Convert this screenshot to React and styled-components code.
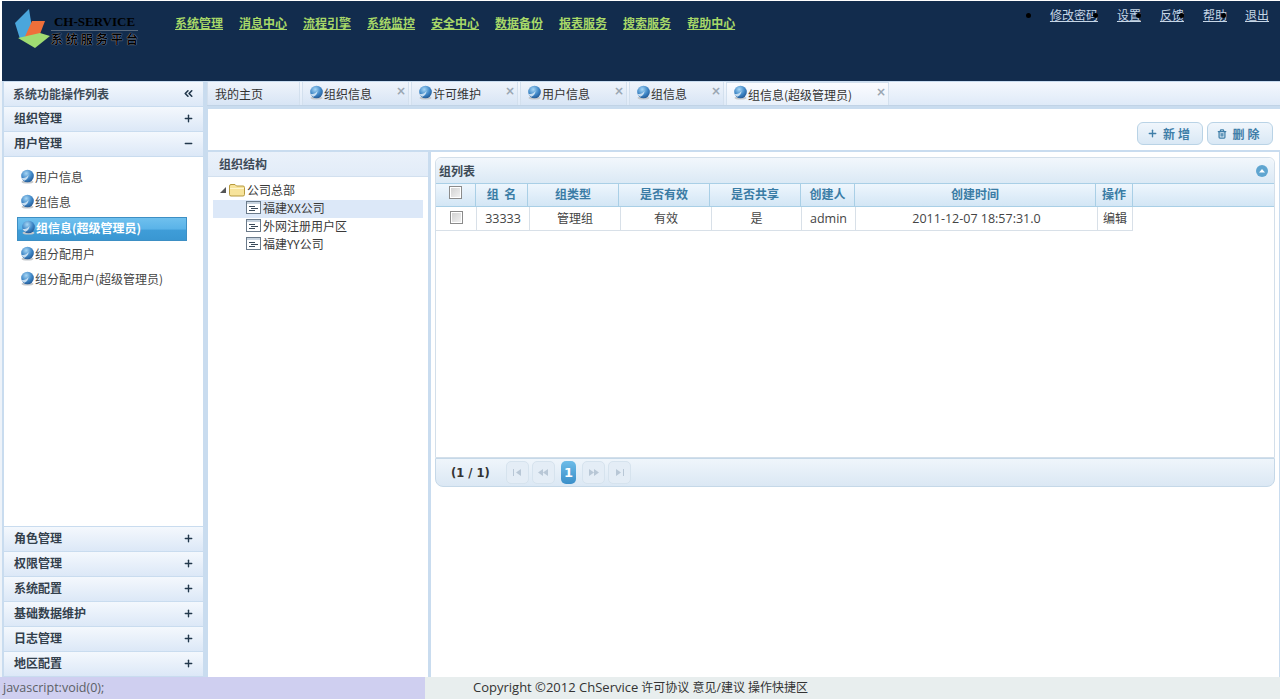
import React from 'react';
import styled, { createGlobalStyle } from 'styled-components';
import { ChevronsLeft, Plus, Minus, Trash2 } from 'lucide-react';

const CJK = '"Noto Sans CJK SC", "Noto Sans", sans-serif';
const BAR = 'linear-gradient(#f4f8fd, #dce8f7)';

const Global = createGlobalStyle`
  html, body { margin: 0; padding: 0; background: #fff; }
  body { font: 12px ${CJK}; color: #333; }
  * { box-sizing: border-box; }
`;

const Page = styled.div`
  width: 1280px;
  height: 699px;
  display: flex;
  flex-direction: column;
  overflow: hidden;
`;

const Header = styled.header`
  height: 80px;
  flex: none;
  margin: 1px 0 0 2px;
  background: #122c4d;
  display: flex;
  align-items: flex-start;
`;

const Logo = styled.div`
  width: 173px;
  flex: none;
  display: flex;
  padding: 7px 0 0 12px;
`;

const LogoText = styled.div`
  width: 87px;
  flex: none;
  margin-top: 7px;
  color: #000;
  text-align: center;
`;

const LogoEn = styled.div`
  font: bold 13px/14px "Liberation Serif", serif;
  white-space: nowrap;
  padding-bottom: 1px;
  border-bottom: 1px solid #5a6b80;
`;

const LogoCn = styled.div`
  font: bold 12px/16px ${CJK};
  letter-spacing: 3px;
  white-space: nowrap;
  text-shadow: 0 0 1px rgba(255, 255, 255, .9);
`;

const Nav = styled.nav`
  display: flex;
  gap: 16px;
  padding-top: 13px;
`;

const NavLink = styled.a`
  font-size: 12px;
  line-height: 17px;
  font-weight: bold;
  color: #a8d868;
  text-decoration: underline;
`;

const UserLinks = styled.ul`
  margin: 0 0 0 auto;
  padding: 5px 11px 0 0;
  display: flex;
  gap: 11px;
`;

const UserLink = styled.li`
  list-style: disc;
  color: #000;
  line-height: 17px;

  &:last-child { margin-left: -1px; }

  a {
    display: inline-block;
    margin-left: 8px;
    color: #c6d6e6;
    text-decoration: underline;
  }
`;

const Main = styled.div`
  flex: 1;
  min-height: 0;
  display: flex;
  background: #c9dcef;
`;

const Sidebar = styled.aside`
  width: 207px;
  flex: none;
  padding: 1px 4px 1px 4px;
  display: flex;
  flex-direction: column;
  gap: 1px;
  background: linear-gradient(90deg, #eef3f9 0, #eef3f9 2px, #c9dcef 2px);
`;

const SideTitle = styled.div`
  height: 24px;
  flex: none;
  display: flex;
  align-items: center;
  justify-content: space-between;
  padding: 0 8px 2px 9px;
  background: ${BAR};
  font-weight: bold;
  color: #3d4a57;
  svg { color: #22384c; }
`;

const SideHead = styled(SideTitle)`
  padding: 0 9px 4px 10px;
  font-size: 12px;
  color: #33404c;
  svg { margin-top: 2px; }
`;

const SideBody = styled.div`
  flex: 1;
  background: #fff;
  padding: 8px 0 0 13px;
`;

const SideItem = styled.div`
  width: 170px;
  height: 24px;
  margin-bottom: ${p => p.$after}px;
  display: flex;
  align-items: center;
  padding: 0 0 ${p => (p.$active ? 4 : 2)}px ${p => (p.$active ? 3 : 2)}px;
  color: ${p => (p.$active ? '#fff' : '#444')};
  font-weight: ${p => (p.$active ? 'bold' : 'normal')};
  background: ${p => (p.$active ? 'linear-gradient(#6fc0ee, #5ab3e8 50%, #3f9dd8 55%, #3a97d2)' : 'none')};
  border: 1px solid ${p => (p.$active ? '#3d8fc4' : 'transparent')};
  svg { flex: none; }
`;

const Content = styled.div`
  flex: 1;
  min-width: 0;
  display: flex;
  flex-direction: column;
  padding: 1px 0 0 0;
`;

const TabBar = styled.div`
  height: 24px;
  flex: none;
  display: flex;
  background: linear-gradient(#f4f8fd, #dfeaf8);
  border-bottom: 1px solid #c1d3e6;
`;

const Tab = styled.div`
  width: ${p => p.$w}px;
  margin-right: ${p => p.$gap}px;
  flex: none;
  display: flex;
  align-items: center;
  padding-left: ${p => (p.$plain ? 7 : 6)}px;
  font-size: 12px;
  color: #333;
  border: solid #d3e0ee;
  border-width: ${p => (p.$active ? '1px 1px 0' : '0 1px 0 1px')};
  background: ${p => (p.$active ? 'linear-gradient(#fbfcff, #e8f0fa)' : 'linear-gradient(#eff4fb, #d8e5f5)')};
  svg { flex: none; margin-top: -3px; }
`;

const TabClose = styled.span`
  margin-left: auto;
  padding-right: 2px;
  margin-top: -5px;
  color: #9aa6b2;
  font: bold 12px "DejaVu Sans", sans-serif;
`;

const Toolbar = styled.div`
  height: 41px;
  flex: none;
  margin: 3px 0 2px 1px;
  background: #fff;
  display: flex;
  align-items: flex-start;
  justify-content: flex-end;
  gap: 4px;
  padding: 13px 7px 0 0;
`;

const ToolButton = styled.button`
  width: 66px;
  height: 23px;
  padding: 0;
  display: flex;
  align-items: center;
  justify-content: center;
  gap: 5px;
  border: 1px solid #b9d3e6;
  border-radius: 6px;
  background: linear-gradient(#f0f6fc, #d9e8f5);
  color: #3f7ea8;
  font: bold 12px ${CJK};
  letter-spacing: 3px;
`;

const Panes = styled.div`
  flex: 1;
  min-height: 0;
  display: flex;
  gap: 3px;
  margin-left: 1px;
`;

const TreePane = styled.section`
  width: 220px;
  flex: none;
  background: #fff;
`;

const PaneTitle = styled.div`
  height: 25px;
  display: flex;
  align-items: center;
  padding: 0 0 2px 11px;
  font-weight: bold;
  color: #3d4a57;
  background: linear-gradient(#eaf1fa, #e2ecf8);
  border-bottom: 1px solid #d2e0ef;
`;

const Tree = styled.div`
  padding: 5px 5px 0;
`;

const TreeRow = styled.div`
  height: 18px;
  display: flex;
  align-items: center;
  gap: 2px;
  padding: 0 0 3px ${p => p.$indent}px;
  color: #3a3a3a;
  background: ${p => (p.$selected ? '#dce8f8' : 'none')};
`;

const GridPane = styled.section`
  flex: 1;
  min-width: 0;
  margin-right: 1px;
  background: #fff;
  padding: 5px 4px 0 4px;
`;

const GridBox = styled.div`
  height: 301px;
  border: 1px solid #d3dfea;
  border-radius: 6px 6px 0 0;
`;

const GridTitle = styled.div`
  height: 25px;
  display: flex;
  align-items: center;
  justify-content: space-between;
  padding: 0 6px 0 3px;
  font-weight: bold;
  color: #3d4a57;
  border-radius: 6px 6px 0 0;
  background: linear-gradient(#f2f7fc, #dbe9f5);
`;

const HeadRow = styled.div`
  height: 24px;
  display: flex;
  border: solid #a9cfe6;
  border-width: 1px 0;
  background: linear-gradient(#eef6fd, #d3e6f5);
`;

const HeadCell = styled.div`
  width: ${p => p.$w}px;
  flex: none;
  display: flex;
  align-items: center;
  justify-content: center;
  padding-bottom: 3px;
  border-right: 1px solid #a9cfe6;
  color: #3a7ca5;
  font-weight: bold;
  word-spacing: 3px;
`;

const Row = styled.div`
  width: 697px;
  height: 24px;
  display: flex;
  border-bottom: 1px solid #d8e0e8;
`;

const Cell = styled.div`
  width: ${p => p.$w}px;
  flex: none;
  display: flex;
  align-items: center;
  justify-content: center;
  padding-bottom: ${p => (p.$latin ? 0 : 2)}px;
  border-right: 1px solid #d8e0e8;
  color: #444;
  font: ${p => (p.$latin ? '12.5px "Open Sans", sans-serif' : `12px ${CJK}`)};
`;

const Check = styled.span`
  width: 13px;
  height: 13px;
  border: 1px solid #8b8b8b;
  background: linear-gradient(135deg, #cfcfcf, #f4f4f4);
  box-shadow: inset 0 0 0 1px #fff;
`;

const HeadCheck = styled(Check)`
  margin-top: -2px;
`;

const Pager = styled.div`
  height: 29px;
  display: flex;
  align-items: center;
  padding-left: 15px;
  border: 1px solid #c5d8e8;
  border-radius: 0 0 8px 8px;
  background: linear-gradient(#eff5fb, #dbe8f4);
`;

const PageInfo = styled.span`
  width: 55px;
  flex: none;
  color: #333;
  font: bold 11.5px "DejaVu Sans", sans-serif;
`;

const PageButton = styled.span`
  width: 23px;
  height: 23px;
  margin-right: ${p => p.$gap}px;
  display: flex;
  align-items: center;
  justify-content: center;
  border: 1px solid #d6e3ee;
  border-radius: 5px;
  background: #e4edf6;
  color: #b8c7d6;
`;

const PageCurrent = styled.span`
  width: 15px;
  height: 23px;
  margin-right: 6px;
  display: flex;
  align-items: center;
  justify-content: center;
  border-radius: 5px;
  background: linear-gradient(#6dbce8, #3b8fc9);
  color: #fff;
  font: bold 13px "DejaVu Sans", sans-serif;
`;

const Footer = styled.footer`
  height: 22px;
  flex: none;
  display: flex;
  background: #e8eeee;
  color: #333;
`;

const Status = styled.div`
  width: 425px;
  flex: none;
  padding-left: 3px;
  background: #cfcff0;
  color: #5c5f66;
  font: 12.5px/21px "Open Sans", sans-serif;
`;

const Copyright = styled.div`
  padding-left: 48px;
  font: 12px/20px "Open Sans", ${CJK};
`;

const CopyrightLatin = styled.span`
  font-size: 13px;
`;

const Globe = ({ id }) => (
  <svg width="15" height="15" viewBox="0 0 15 15">
    <defs>
      <radialGradient id={id} cx="0.4" cy="0.3" r="0.8">
        <stop offset="0" stopColor="#a6d6f5" />
        <stop offset="0.55" stopColor="#3e86c6" />
        <stop offset="1" stopColor="#1d4f8a" />
      </radialGradient>
    </defs>
    <ellipse cx="7.5" cy="13" rx="6" ry="1.6" fill="#c4c8cc" />
    <circle cx="7.5" cy="7" r="6.3" fill={`url(#${id})`} />
    <path d="M1.6 8.8 C4.5 9.4 6.8 8.4 8.5 6 C8.4 8.8 6.6 11 4.2 11.8 C3 11.2 2.1 10.1 1.6 8.8Z" fill="#e4f1fb" opacity=".8" />
  </svg>
);

const FolderIcon = () => (
  <svg width="16" height="14" viewBox="0 0 16 14">
    <path d="M.5 3 Q.5 1.5 2 1.5 H6 L7.5 3 H14 Q15.5 3 15.5 4.5 V11.5 Q15.5 13 14 13 H2 Q.5 13 .5 11.5Z" fill="#f7e39a" stroke="#b79a3e" />
    <path d="M1 5.5 H15" stroke="#fff6cc" />
  </svg>
);

const NodeIcon = () => (
  <svg width="15" height="13" viewBox="0 0 15 13">
    <rect x=".5" y=".5" width="14" height="12" fill="#fff" stroke="#6a7a8a" />
    <rect x="1" y="1" width="13" height="2" fill="#c8d4e0" />
    <path d="M3 5.5 H9 M5 7.5 H12 M3 9.5 H9" stroke="#3a4a5a" />
  </svg>
);

const Triangle = () => (
  <svg width="8" height="8" viewBox="0 0 8 8"><path d="M1 7 H7 V1Z" fill="#555" /></svg>
);

const Collapse = () => (
  <svg width="12" height="12" viewBox="0 0 12 12">
    <circle cx="6" cy="6" r="6" fill="#5fa5d0" />
    <path d="M3 7.5 L6 4 L9 7.5Z" fill="#fff" />
  </svg>
);

const PageGlyph = ({ d }) => (
  <svg width="11" height="9" viewBox="0 0 11 9"><path d={d} fill="currentColor" /></svg>
);

const NAV = ['系统管理', '消息中心', '流程引擎', '系统监控', '安全中心', '数据备份', '报表服务', '搜索服务', '帮助中心'];
const USER = ['修改密码', '设置', '反馈', '帮助', '退出'];
const TABS = [
  { label: '组织信息', w: 107, gap: 2 },
  { label: '许可维护', w: 107, gap: 2 },
  { label: '用户信息', w: 107, gap: 2 },
  { label: '组信息', w: 95, gap: 2 },
  { label: '组信息(超级管理员)', w: 163, gap: 0, active: true },
];
const SIDE_ITEMS = [
  { label: '用户信息', after: 1 },
  { label: '组信息', after: 3 },
  { label: '组信息(超级管理员)', after: 1, active: true },
  { label: '组分配用户', after: 1 },
  { label: '组分配用户(超级管理员)', after: 1 },
];
const SIDE_BOTTOM = ['角色管理', '权限管理', '系统配置', '基础数据维护', '日志管理', '地区配置'];
const HEAD_WIDTHS = [40, 52, 91, 91, 91, 54, 241, 37];
const HEADS = ['组 名', '组类型', '是否有效', '是否共享', '创建人', '创建时间', '操作'];
const CELL_WIDTHS = [41, 53, 91, 91, 90, 54, 242, 35];

export default function App() {
  return (
    <Page>
      <Global />
      <Header>
        <Logo>
          <svg width="37" height="42" viewBox="14 7 37 42">
            <polygon points="15,22 29,8 33,33 20,38" fill="#4aa6dc" />
            <polygon points="32,20 45,20 40,33 23,40" fill="#ee6f3a" />
            <polygon points="18,37 35,47 50,35 40,32" fill="#9fdc72" />
          </svg>
          <LogoText>
            <LogoEn>CH-SERVICE</LogoEn>
            <LogoCn>系统服务平台</LogoCn>
          </LogoText>
        </Logo>
        <Nav>
          {NAV.map(n => <NavLink key={n} href="#">{n}</NavLink>)}
        </Nav>
        <UserLinks>
          {USER.map(u => <UserLink key={u}><a href="#">{u}</a></UserLink>)}
        </UserLinks>
      </Header>
      <Main>
        <Sidebar>
          <SideTitle>系统功能操作列表<ChevronsLeft size={13} strokeWidth={3} /></SideTitle>
          <SideHead>组织管理<Plus size={11} strokeWidth={3} /></SideHead>
          <SideHead>用户管理<Minus size={11} strokeWidth={3} /></SideHead>
          <SideBody>
            {SIDE_ITEMS.map((s, i) => (
              <SideItem key={s.label} $active={s.active} $after={s.after}>
                <Globe id={`side${i}`} />{s.label}
              </SideItem>
            ))}
          </SideBody>
          {SIDE_BOTTOM.map(s => (
            <SideHead key={s}>{s}<Plus size={11} strokeWidth={3} /></SideHead>
          ))}
        </Sidebar>
        <Content>
          <TabBar>
            <Tab $w={93} $gap={2} $plain>我的主页</Tab>
            {TABS.map((t, i) => (
              <Tab key={t.label} $w={t.w} $gap={t.gap} $active={t.active}>
                <Globe id={`tab${i}`} />{t.label}<TabClose>×</TabClose>
              </Tab>
            ))}
          </TabBar>
          <Toolbar>
            <ToolButton><Plus size={11} strokeWidth={3} />新增</ToolButton>
            <ToolButton><Trash2 size={10} strokeWidth={3} />删除</ToolButton>
          </Toolbar>
          <Panes>
            <TreePane>
              <PaneTitle>组织结构</PaneTitle>
              <Tree>
                <TreeRow $indent={6}><Triangle /><FolderIcon />公司总部</TreeRow>
                <TreeRow $indent={33} $selected><NodeIcon />福建XX公司</TreeRow>
                <TreeRow $indent={33}><NodeIcon />外网注册用户区</TreeRow>
                <TreeRow $indent={33}><NodeIcon />福建YY公司</TreeRow>
              </Tree>
            </TreePane>
            <GridPane>
              <GridBox>
                <GridTitle>组列表<Collapse /></GridTitle>
                <HeadRow>
                  <HeadCell $w={HEAD_WIDTHS[0]}><HeadCheck /></HeadCell>
                  {HEADS.map((h, i) => <HeadCell key={h} $w={HEAD_WIDTHS[i + 1]}>{h}</HeadCell>)}
                </HeadRow>
                <Row>
                  <Cell $w={CELL_WIDTHS[0]}><Check /></Cell>
                  <Cell $w={CELL_WIDTHS[1]} $latin>33333</Cell>
                  <Cell $w={CELL_WIDTHS[2]}>管理组</Cell>
                  <Cell $w={CELL_WIDTHS[3]}>有效</Cell>
                  <Cell $w={CELL_WIDTHS[4]}>是</Cell>
                  <Cell $w={CELL_WIDTHS[5]} $latin>admin</Cell>
                  <Cell $w={CELL_WIDTHS[6]} $latin>2011-12-07 18:57:31.0</Cell>
                  <Cell $w={CELL_WIDTHS[7]}>编辑</Cell>
                </Row>
              </GridBox>
              <Pager>
                <PageInfo>(1 / 1)</PageInfo>
                <PageButton $gap={3}><PageGlyph d="M1 1 H2 V8 H1Z M9 1 V8 L4 4.5Z" /></PageButton>
                <PageButton $gap={6}><PageGlyph d="M5 1 V8 L0 4.5Z M10 1 V8 L5 4.5Z" /></PageButton>
                <PageCurrent>1</PageCurrent>
                <PageButton $gap={3}><PageGlyph d="M1 1 V8 L6 4.5Z M6 1 V8 L11 4.5Z" /></PageButton>
                <PageButton $gap={0}><PageGlyph d="M2 1 V8 L7 4.5Z M9 1 H10 V8 H9Z" /></PageButton>
              </Pager>
            </GridPane>
          </Panes>
        </Content>
      </Main>
      <Footer>
        <Status>javascript:void(0);</Status>
        <Copyright><CopyrightLatin>Copyright ©2012 ChService</CopyrightLatin> 许可协议 意见/建议 操作快捷区</Copyright>
      </Footer>
    </Page>
  );
}
